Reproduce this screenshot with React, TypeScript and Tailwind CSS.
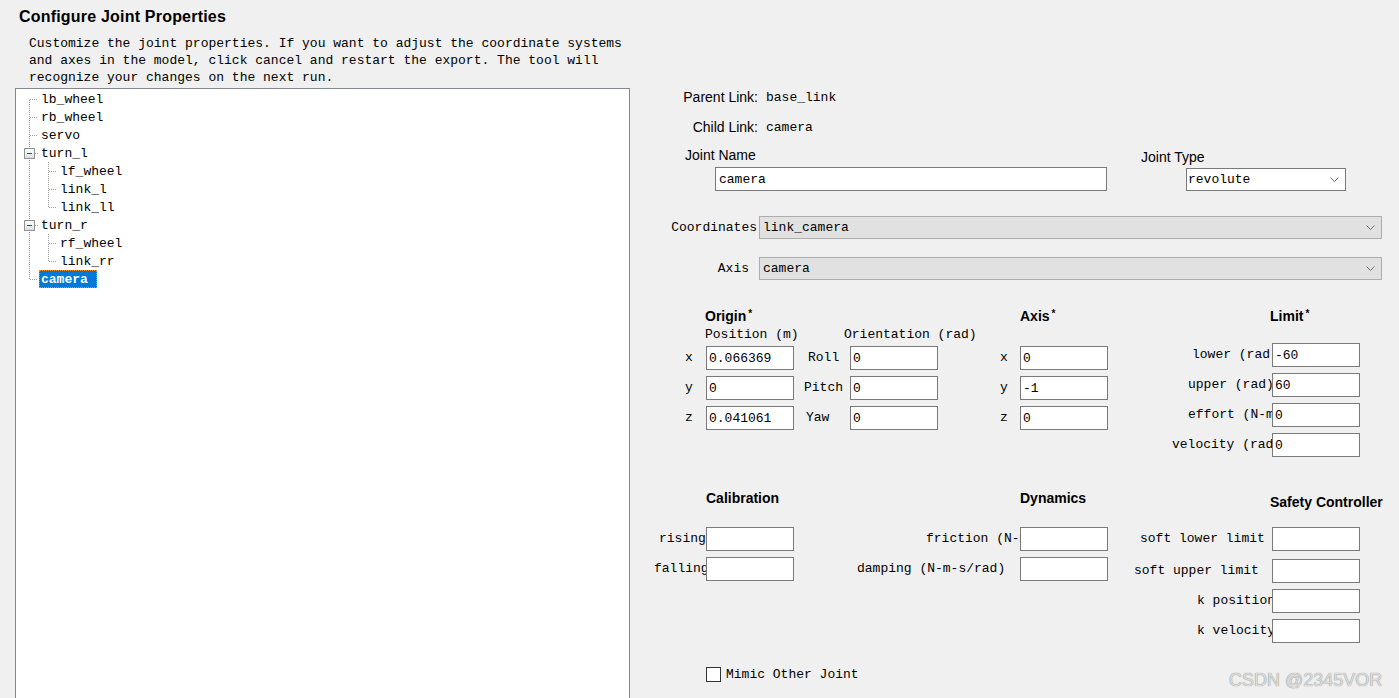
import React from "react";

const MONO = "font-['Liberation_Mono',monospace] text-[13px] text-black";
const SANS = "font-['Liberation_Sans',Arial,sans-serif] text-black";

function Chevron() {
  return (
    <svg width="9" height="5" viewBox="0 0 9 5" className="shrink-0">
      <path d="M0.5 0.5 L4.5 4.5 L8.5 0.5" fill="none" stroke="#6a6a6a" strokeWidth="1" />
    </svg>
  );
}

function Field({ value = "" }: { value?: string }) {
  return (
    <div className={`w-[88px] h-[24px] shrink-0 border border-[#7a7a7a] bg-white flex items-center pl-[2px] pt-[1px] leading-[16px] ${MONO}`}>
      {value}
    </div>
  );
}

function Star() {
  return <span className="text-[10px] relative -top-[4px] ml-[2px]">*</span>;
}

const treeRows: { label: string; level: number }[] = [
  { label: "lb_wheel", level: 1 },
  { label: "rb_wheel", level: 1 },
  { label: "servo", level: 1 },
  { label: "turn_l", level: 1 },
  { label: "lf_wheel", level: 2 },
  { label: "link_l", level: 2 },
  { label: "link_ll", level: 2 },
  { label: "turn_r", level: 1 },
  { label: "rf_wheel", level: 2 },
  { label: "link_rr", level: 2 },
];

function TreeLines() {
  const c = (k: number) => 10.5 + 18 * k;
  const dot = { stroke: "#a0a0a0", strokeWidth: 1, strokeDasharray: "1 1" };
  const box = (k: number) => (
    <g key={"b" + k}>
      <rect x={8.5} y={c(k) - 5} width={10} height={10} fill="url(#g)" stroke="#919191" />
      <line x1={11} y1={c(k)} x2={16} y2={c(k)} stroke="#2450a8" strokeWidth={1} />
      <line x1={19} y1={c(k)} x2={22} y2={c(k)} {...dot} />
    </g>
  );
  return (
    <svg className="absolute left-0 top-0" width="60" height="200">
      <defs>
        <linearGradient id="g" x1="0" y1="0" x2="0" y2="1">
          <stop offset="0" stopColor="#ffffff" />
          <stop offset="1" stopColor="#dcdcdc" />
        </linearGradient>
      </defs>
      <line x1={13.5} y1={11} x2={13.5} y2={c(10)} {...dot} />
      {[0, 1, 2, 10].map((k) => (
        <line key={k} x1={14} y1={c(k)} x2={22} y2={c(k)} {...dot} />
      ))}
      <line x1={32.5} y1={73} x2={32.5} y2={c(6)} {...dot} />
      <line x1={32.5} y1={145} x2={32.5} y2={c(9)} {...dot} />
      {[4, 5, 6, 8, 9].map((k) => (
        <line key={"t" + k} x1={33} y1={c(k)} x2={41} y2={c(k)} {...dot} />
      ))}
      {box(3)}
      {box(7)}
    </svg>
  );
}

export default function App() {
  return (
    <div className="relative w-[1399px] h-[698px] overflow-hidden bg-[#f0f0f0] flex">
      {/* Left column */}
      <div className="w-[630px] h-[698px] flex flex-col shrink-0">
        <div className={`${SANS} font-bold text-[16px] leading-[20px] tracking-[0.2px] pl-[19px] pt-[7px]`}>
          Configure Joint Properties
        </div>
        <div className={`${MONO} leading-[17px] pl-[29px] mt-[8px] whitespace-nowrap`}>
          Customize the joint properties. If you want to adjust the coordinate systems
          <br />
          and axes in the model, click cancel and restart the export. The tool will
          <br />
          recognize your changes on the next run.
        </div>
        <div className="ml-[15px] mt-[2px] w-[615px] flex-1 border border-b-0 border-[#828790] bg-white relative">
          <TreeLines />
          <div className="relative pt-[1px] flex flex-col">
            {treeRows.map((r) => (
              <div
                key={r.label}
                className={`h-[18px] flex items-center pt-[2px] leading-[16px] ${MONO} ${r.level === 1 ? "pl-[25px]" : "pl-[44px]"}`}
              >
                {r.label}
              </div>
            ))}
            <div className="h-[18px] flex items-center pl-[23px]">
              <span
                className={`h-[18px] w-[58px] px-[1px] pt-[1px] flex items-center leading-[16px] bg-[#0078d7] border border-dotted border-[#e8902c] font-['Liberation_Mono',monospace] text-[13px] font-bold text-white`}
              >
                camera
              </span>
            </div>
          </div>
        </div>
      </div>

      {/* Right column */}
      <div className="flex-1 h-[698px] flex flex-col pt-[87px]">
        {/* Parent link */}
        <div className="h-[20px] flex items-center">
          <div className={`w-[128px] text-right text-[14px] ${SANS}`}>Parent Link:</div>
          <div className={`ml-[8px] pt-[1px] ${MONO}`}>base_link</div>
        </div>
        {/* Child link */}
        <div className="mt-[10px] h-[20px] flex items-center">
          <div className={`w-[128px] text-right text-[14px] ${SANS}`}>Child Link:</div>
          <div className={`ml-[8px] pt-[1px] ${MONO}`}>camera</div>
        </div>
        {/* Joint name/type labels */}
        <div className="mt-[10px] h-[20px] flex items-start">
          <div className={`ml-[55px] w-[456px] text-[14px] leading-[16px] ${SANS}`}>Joint Name</div>
          <div className={`mt-[2px] text-[14px] leading-[16px] ${SANS}`}>Joint Type</div>
        </div>
        {/* Joint name/type inputs */}
        <div className="h-[24px] flex items-start">
          <div className={`ml-[85px] w-[392px] h-[24px] border border-[#7a7a7a] bg-white flex items-center pl-[3px] pt-[1px] ${MONO}`}>
            camera
          </div>
          <div className={`ml-[79px] mt-[1px] w-[160px] h-[23px] border border-[#7a7a7a] bg-white flex items-center justify-between pl-[1px] pr-[6px] ${MONO}`}>
            <span className="pt-[1px]">revolute</span>
            <Chevron />
          </div>
        </div>
        {/* Coordinates */}
        <div className="mt-[25px] h-[23px] flex items-center">
          <div className={`w-[129px] text-right pr-[2px] ${MONO}`}>Coordinates</div>
          <div className={`w-[623px] h-[23px] border border-[#adadad] bg-[#e1e1e1] flex items-center justify-between pl-[3px] pr-[6px] ${MONO}`}>
            <span className="pt-[1px]">link_camera</span>
            <Chevron />
          </div>
        </div>
        {/* Axis */}
        <div className="mt-[18px] h-[23px] flex items-center">
          <div className={`w-[129px] text-right pr-[10px] ${MONO}`}>Axis</div>
          <div className={`w-[623px] h-[23px] border border-[#adadad] bg-[#e1e1e1] flex items-center justify-between pl-[3px] pr-[6px] ${MONO}`}>
            <span className="pt-[1px]">camera</span>
            <Chevron />
          </div>
        </div>
        {/* Headings */}
        <div className={`mt-[29px] h-[16px] flex items-center font-bold text-[14px] leading-[16px] ${SANS}`}>
          <div className="ml-[75px] w-[315px]">
            Origin
            <Star />
          </div>
          <div className="w-[250px]">
            Axis
            <Star />
          </div>
          <div>
            Limit
            <Star />
          </div>
        </div>
        <div className={`mt-[2px] h-[16px] flex items-center leading-[16px] ${MONO}`}>
          <div className="ml-[75px] w-[139px]">Position (m)</div>
          <div>Orientation (rad)</div>
        </div>
        {/* Origin / Axis / Limit fields */}
        <div className="flex items-start">
          <div className="mt-[3px] flex flex-col gap-[6px]">
            {[
              { a: "x", v: "0.066369", o: "Roll", op: "pl-[14px]", ax: "x", av: "0" },
              { a: "y", v: "0", o: "Pitch", op: "pl-[10px]", ax: "y", av: "-1" },
              { a: "z", v: "0.041061", o: "Yaw", op: "pl-[12px]", ax: "z", av: "0" },
            ].map((r) => (
              <div key={r.a} className={`h-[24px] flex items-center ${MONO}`}>
                <div className="w-[76px] pl-[55px]">{r.a}</div>
                <Field value={r.v} />
                <div className={`w-[56px] ${r.op}`}>{r.o}</div>
                <Field value="0" />
                <div className="w-[82px] pl-[62px]">{r.ax}</div>
                <Field value={r.av} />
              </div>
            ))}
          </div>
          <div className="flex flex-col gap-[6px]">
            {[
              { l: "lower (rad)", p: "pl-[84px]", v: "-60" },
              { l: "upper (rad)", p: "pl-[80px]", v: "60" },
              { l: "effort (N-m)", p: "pl-[80px]", v: "0" },
              { l: "velocity (rad/s)", p: "pl-[64px]", v: "0" },
            ].map((r) => (
              <div key={r.l} className={`h-[24px] flex items-center ${MONO}`}>
                <div className={`w-[164px] overflow-hidden whitespace-nowrap ${r.p}`}>{r.l}</div>
                <Field value={r.v} />
              </div>
            ))}
          </div>
        </div>
        {/* Calibration / Dynamics / Safety headings */}
        <div className={`mt-[33px] h-[16px] flex items-start font-bold text-[14px] leading-[16px] ${SANS}`}>
          <div className="ml-[76px] w-[314px]">Calibration</div>
          <div className="w-[250px]">Dynamics</div>
          <div className="mt-[4px]">Safety Controller</div>
        </div>
        <div className="mt-[21px] flex items-start">
          <div className="flex flex-col gap-[6px]">
            {[
              { c: "rising", cp: "pl-[29px]", d: "friction (N-m)", dp: "pl-[132px]" },
              { c: "falling", cp: "pl-[24px]", d: "damping (N-m-s/rad)", dp: "pl-[63px]" },
            ].map((r) => (
              <div key={r.c} className={`h-[24px] flex items-center ${MONO}`}>
                <div className={`w-[76px] overflow-hidden whitespace-nowrap ${r.cp}`}>{r.c}</div>
                <Field />
                <div className={`w-[226px] overflow-hidden whitespace-nowrap ${r.dp}`}>{r.d}</div>
                <Field />
              </div>
            ))}
          </div>
          <div className="flex flex-col">
            {[
              { l: "soft lower limit", p: "pl-[32px]", m: "" },
              { l: "soft upper limit", p: "pl-[26px]", m: "mt-[8px]" },
              { l: "k position", p: "pl-[89px]", m: "mt-[6px]" },
              { l: "k velocity", p: "pl-[89px]", m: "mt-[6px]" },
            ].map((r) => (
              <div key={r.l} className={`h-[24px] flex items-center ${r.m} ${MONO}`}>
                <div className={`w-[164px] overflow-hidden whitespace-nowrap ${r.p}`}>{r.l}</div>
                <Field />
              </div>
            ))}
          </div>
        </div>
        {/* Mimic */}
        <div className="mt-[24px] h-[15px] flex items-center">
          <div className="ml-[76px] w-[15px] h-[15px] border border-[#333333] bg-white" />
          <div className={`ml-[5px] pt-[1px] ${MONO}`}>Mimic Other Joint</div>
        </div>
      </div>

      {/* Watermark */}
      <div
        className={`absolute left-[1229px] top-[670px] text-[18px] leading-[20px] font-['Liberation_Sans',Arial,sans-serif] text-[#dcdcdc] [text-shadow:0_0_1px_#6f6f6f]`}
      >
        CSDN @2345VOR
      </div>
    </div>
  );
}
